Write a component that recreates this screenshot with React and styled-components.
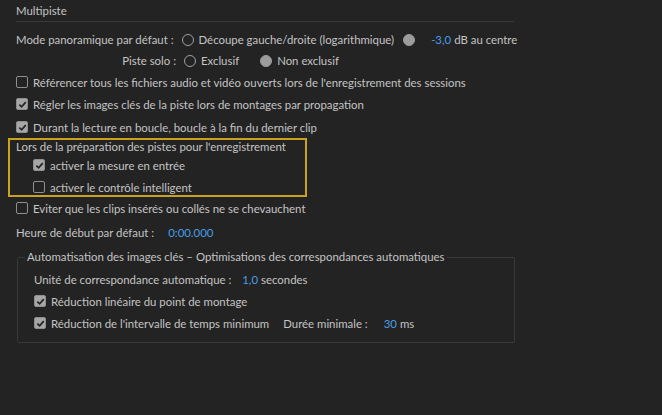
import React from 'react'
import styled, { createGlobalStyle } from 'styled-components'

const Global = createGlobalStyle`
  html, body {
    margin: 0;
    background: #232323;
  }
  body {
    font-family: Lato, "Open Sans", sans-serif;
    font-size: 11.4px;
    color: #c4c4c4;
  }
`

const Page = styled.div`
  width: 662px;
  height: 415px;
  padding: 5px 0 0 16px;
  box-sizing: border-box;
  overflow: hidden;
`

const Header = styled.div`
  width: 498px;
  padding-bottom: 4px;
  border-bottom: 1px solid #3a3a3a;
  line-height: 12px;
`

const Row = styled.div`
  display: flex;
  align-items: center;
  height: ${p => p.$h || 22}px;
  margin-top: ${p => p.$mt || 0}px;
  white-space: nowrap;
`

const Label = styled.span`
  display: inline-block;
  width: ${p => (p.$w ? `${p.$w}px` : 'auto')};
  text-align: ${p => (p.$right ? 'right' : 'left')};
  margin-right: ${p => p.$mr || 0}px;
  margin-left: ${p => p.$ml || 0}px;
`

const Blue = styled.span`
  color: #4a9ce6;
  margin-right: 3px;
`

const RadioDot = styled.span`
  width: 10px;
  height: 10px;
  border-radius: 50%;
  border: 1.5px solid ${p => (p.$on ? '#9c9c9c' : '#a0a0a0')};
  background: ${p => (p.$on ? '#9c9c9c' : 'transparent')};
  margin-right: 5px;
  flex: none;
`

const Radio = styled.label`
  display: inline-flex;
  align-items: center;
  margin-right: ${p => p.$mr || 0}px;
`

const Box = styled.span`
  width: 10px;
  height: 10px;
  border: 1px solid #8e8e8e;
  border-radius: 2px;
  background: ${p => (p.$on ? '#a6a6a6' : 'transparent')};
  margin-right: 5px;
  flex: none;
  display: flex;
  align-items: center;
  justify-content: center;
`

const Check = ({ on, mt, children }) => (
  <Row $mt={mt}>
    <Box $on={on}>
      {on && (
        <svg width="9" height="9" viewBox="0 0 10 10">
          <path d="M1.5 5.2 L4 7.6 L8.6 2.4" fill="none" stroke="#242424" strokeWidth="1.9" />
        </svg>
      )}
    </Box>
    {children}
  </Row>
)

const Highlight = styled.div`
  margin: 0 0 0 -8px;
  width: 299px;
  height: 59px;
  border: 2px solid #c9a21e;
  padding: 0 0 0 6px;
  box-sizing: border-box;
  display: flex;
  flex-direction: column;
`

const Indent = styled.div`
  padding-left: 17px;
`

const SubTitle = styled.div`
  height: 14px;
  line-height: 13px;
  flex: none;
`

const Group = styled.fieldset`
  margin: 8px 0 0 1px;
  width: 498px;
  height: 92px;
  box-sizing: border-box;
  border: 1px solid #393939;
  padding: 6px 0 0 16px;
  border-radius: 2px;
`

const Legend = styled.legend`
  padding: 0 2px;
  margin-left: -9px;
  line-height: 12px;
`

const Spacer = styled.div`
  height: ${p => p.$h}px;
`

export default function App() {
  return (
    <>
      <Global />
      <Page>
        <Header>Multipiste</Header>
        <Spacer $h={7} />
        <Row $h={21}>
          <Label $mr={8}>Mode panoramique par défaut :</Label>
          <Radio $mr={9}>
            <RadioDot />
            Découpe gauche/droite (logarithmique)
          </Radio>
          <Radio $mr={11}>
            <RadioDot $on />
          </Radio>
          <Blue>-3,0</Blue>dB au centre
        </Row>
        <Row $h={21}>
          <Label $w={160} $right $mr={8}>Piste solo :</Label>
          <Radio $mr={21}>
            <RadioDot />
            Exclusif
          </Radio>
          <Radio>
            <RadioDot $on />
            Non exclusif
          </Radio>
        </Row>
        <Check>Référencer tous les fichiers audio et vidéo ouverts lors de l'enregistrement des sessions</Check>
        <Check on>Régler les images clés de la piste lors de montages par propagation</Check>
        <Check on mt={1}>Durant la lecture en boucle, boucle à la fin du dernier clip</Check>
        <Highlight>
          <SubTitle>Lors de la préparation des pistes pour l'enregistrement</SubTitle>
          <Indent>
            <Check on>activer la mesure en entrée</Check>
            <Check>activer le contrôle intelligent</Check>
          </Indent>
        </Highlight>
        <Check>Eviter que les clips insérés ou collés ne se chevauchent</Check>
        <Row $mt={2}>
          <Label $mr={14}>Heure de début par défaut :</Label>
          <Blue>0:00.000</Blue>
        </Row>
        <Group>
          <Legend>Automatisation des images clés – Optimisations des correspondances automatiques</Legend>
          <Row $h={21}>
            <Label $mr={11}>Unité de correspondance automatique :</Label>
            <Blue>1,0</Blue>secondes
          </Row>
          <Check on>Réduction linéaire du point de montage</Check>
          <Check on>
            Réduction de l'intervalle de temps minimum
            <Label $ml={14} $mr={16}>Durée minimale :</Label>
            <Blue>30</Blue>ms
          </Check>
        </Group>
      </Page>
    </>
  )
}
